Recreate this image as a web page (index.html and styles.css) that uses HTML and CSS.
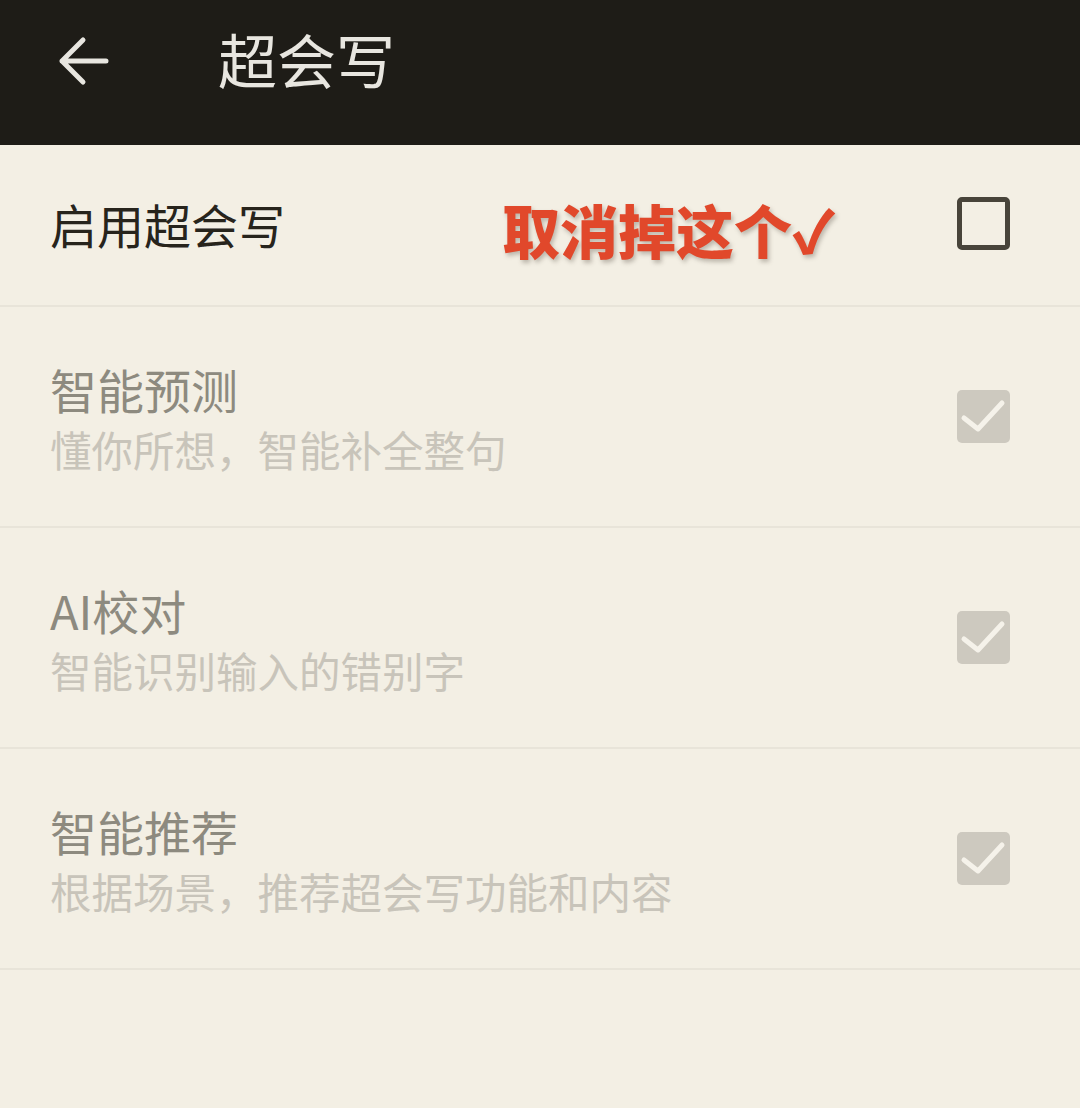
FILE: index.html
```html
<!DOCTYPE html>
<html lang="zh-CN">
<head>
<meta charset="utf-8">
<title>超会写</title>
<link rel="stylesheet" href="styles.css">
</head>
<body>
<header class="appbar">
  <svg class="back" width="52" height="52" viewBox="0 0 52 52">
    <path d="M4 25 H48 M4 25 L25 4 M4 25 L25 46" fill="none" stroke="#e8e6e0" stroke-width="5" stroke-linecap="round" stroke-linejoin="round"/>
  </svg>
  <h1 class="title">超会写</h1>
</header>
<main class="list">
  <div class="row row-main">
    <div class="text">
      <div class="label label-on">启用超会写</div>
    </div>
    <span class="note">取消掉这个✓</span>
    <span class="box box-empty"></span>
  </div>
  <div class="row">
    <div class="text">
      <div class="label">智能预测</div>
      <div class="sub">懂你所想，智能补全整句</div>
    </div>
    <span class="box box-checked">
      <svg width="53" height="53" viewBox="0 0 53 53"><path d="M7 28 L21 39 L45 13" fill="none" stroke="#f5f2ea" stroke-width="5" stroke-linecap="round" stroke-linejoin="round"/></svg>
    </span>
  </div>
  <div class="row">
    <div class="text">
      <div class="label">AI校对</div>
      <div class="sub">智能识别输入的错别字</div>
    </div>
    <span class="box box-checked">
      <svg width="53" height="53" viewBox="0 0 53 53"><path d="M7 28 L21 39 L45 13" fill="none" stroke="#f5f2ea" stroke-width="5" stroke-linecap="round" stroke-linejoin="round"/></svg>
    </span>
  </div>
  <div class="row">
    <div class="text">
      <div class="label">智能推荐</div>
      <div class="sub">根据场景，推荐超会写功能和内容</div>
    </div>
    <span class="box box-checked">
      <svg width="53" height="53" viewBox="0 0 53 53"><path d="M7 28 L21 39 L45 13" fill="none" stroke="#f5f2ea" stroke-width="5" stroke-linecap="round" stroke-linejoin="round"/></svg>
    </span>
  </div>
</main>
</body>
</html>
```
FILE: styles.css
```css
html, body {
  margin: 0;
  padding: 0;
}
body {
  background: #f3efe4;
  font-family: "Noto Sans CJK SC", "Noto Sans", "Liberation Sans", sans-serif;
  width: 1080px;
  height: 1108px;
  overflow: hidden;
}
.appbar {
  height: 145px;
  background: #1e1c17;
  display: flex;
  align-items: center;
  box-sizing: border-box;
  padding-left: 58px;
  padding-bottom: 22px;
}
.back {
  display: block;
}
.title {
  margin: -6px 0 0 108px;
  font-size: 59px;
  font-weight: 400;
  color: #e8e6e0;
  line-height: 1;
}
.list {
  display: flex;
  flex-direction: column;
}
.row {
  position: relative;
  display: flex;
  align-items: center;
  justify-content: space-between;
  height: 221px;
  box-sizing: border-box;
  padding: 0 70px 0 50px;
  border-bottom: 2px solid #e8e4d9;
}
.row-main {
  height: 162px;
}
.text {
  display: flex;
  flex-direction: column;
}
.label {
  font-size: 47px;
  line-height: 60px;
  color: #8d8a7f;
}
.label-on {
  color: #27241c;
  margin-top: -4px;
}
.sub {
  font-size: 41.5px;
  line-height: 56px;
  color: #c8c4ba;
  margin-top: 2px;
}
.row .text {
  margin-top: 2px;
}
.note {
  position: absolute;
  left: 502px;
  top: 44px;
  font-size: 58px;
  font-weight: 900;
  color: #e1482b;
  line-height: 80px;
  text-shadow: 2px 3px 4px rgba(90, 80, 70, 0.35);
}
.box {
  width: 53px;
  height: 53px;
  box-sizing: border-box;
  border-radius: 5px;
  display: block;
  flex: none;
}
.box-empty {
  border: 5px solid #48443a;
  margin-top: -4px;
}
.box-checked {
  background: #cdc9bf;
}
.box-checked svg {
  display: block;
}
```
